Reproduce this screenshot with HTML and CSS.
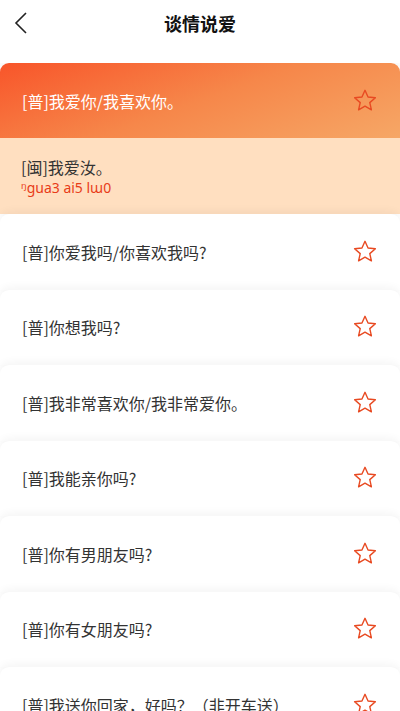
FILE: index.html
```html
<!DOCTYPE html>
<html lang="zh">
<head>
<meta charset="utf-8">
<link rel="stylesheet" href="styles.css">
</head>
<body>
<header class="topbar">
  <svg class="back" width="14" height="22" viewBox="0 0 14 22"><path d="M12 1 L2 11 L12 21" fill="none" stroke="#222" stroke-width="1.6"/></svg>
  <h1 class="title">谈情说爱</h1>
</header>
<main class="list">
  <section class="card open">
    <div class="row active">
      <span class="text">[普]我爱你/我喜欢你。</span>
      <svg class="star" viewBox="0 0 24 24"><path d="M12 2.8 L14.6 8.6 L20.9 9.2 L16.1 13.4 L17.5 19.6 L12 16.4 L6.5 19.6 L7.9 13.4 L3.1 9.2 L9.4 8.6 Z" fill="none" stroke="#e84a22" stroke-width="1.2" stroke-linejoin="round"/></svg>
    </div>
    <div class="detail">
      <div class="dtext">[闽]我爱汝。</div>
      <div class="pinyin">ᵑgua3 ai5 lɯ0</div>
    </div>
  </section>
  <section class="card"><div class="row"><span class="text">[普]你爱我吗/你喜欢我吗?</span><svg class="star" viewBox="0 0 24 24"><path d="M12 2.8 L14.6 8.6 L20.9 9.2 L16.1 13.4 L17.5 19.6 L12 16.4 L6.5 19.6 L7.9 13.4 L3.1 9.2 L9.4 8.6 Z" fill="none" stroke="#e84a22" stroke-width="1.2" stroke-linejoin="round"/></svg></div></section>
  <section class="card"><div class="row"><span class="text">[普]你想我吗?</span><svg class="star" viewBox="0 0 24 24"><path d="M12 2.8 L14.6 8.6 L20.9 9.2 L16.1 13.4 L17.5 19.6 L12 16.4 L6.5 19.6 L7.9 13.4 L3.1 9.2 L9.4 8.6 Z" fill="none" stroke="#e84a22" stroke-width="1.2" stroke-linejoin="round"/></svg></div></section>
  <section class="card"><div class="row"><span class="text">[普]我非常喜欢你/我非常爱你。</span><svg class="star" viewBox="0 0 24 24"><path d="M12 2.8 L14.6 8.6 L20.9 9.2 L16.1 13.4 L17.5 19.6 L12 16.4 L6.5 19.6 L7.9 13.4 L3.1 9.2 L9.4 8.6 Z" fill="none" stroke="#e84a22" stroke-width="1.2" stroke-linejoin="round"/></svg></div></section>
  <section class="card"><div class="row"><span class="text">[普]我能亲你吗?</span><svg class="star" viewBox="0 0 24 24"><path d="M12 2.8 L14.6 8.6 L20.9 9.2 L16.1 13.4 L17.5 19.6 L12 16.4 L6.5 19.6 L7.9 13.4 L3.1 9.2 L9.4 8.6 Z" fill="none" stroke="#e84a22" stroke-width="1.2" stroke-linejoin="round"/></svg></div></section>
  <section class="card"><div class="row"><span class="text">[普]你有男朋友吗?</span><svg class="star" viewBox="0 0 24 24"><path d="M12 2.8 L14.6 8.6 L20.9 9.2 L16.1 13.4 L17.5 19.6 L12 16.4 L6.5 19.6 L7.9 13.4 L3.1 9.2 L9.4 8.6 Z" fill="none" stroke="#e84a22" stroke-width="1.2" stroke-linejoin="round"/></svg></div></section>
  <section class="card"><div class="row"><span class="text">[普]你有女朋友吗?</span><svg class="star" viewBox="0 0 24 24"><path d="M12 2.8 L14.6 8.6 L20.9 9.2 L16.1 13.4 L17.5 19.6 L12 16.4 L6.5 19.6 L7.9 13.4 L3.1 9.2 L9.4 8.6 Z" fill="none" stroke="#e84a22" stroke-width="1.2" stroke-linejoin="round"/></svg></div></section>
  <section class="card"><div class="row"><span class="text">[普]我送你回家，好吗？（非开车送）</span><svg class="star" viewBox="0 0 24 24"><path d="M12 2.8 L14.6 8.6 L20.9 9.2 L16.1 13.4 L17.5 19.6 L12 16.4 L6.5 19.6 L7.9 13.4 L3.1 9.2 L9.4 8.6 Z" fill="none" stroke="#e84a22" stroke-width="1.2" stroke-linejoin="round"/></svg></div></section>
</main>
</body>
</html>
```
FILE: styles.css
```css
* { box-sizing: border-box; }
html, body { margin: 0; padding: 0; }
body {
  width: 400px;
  height: 711px;
  overflow: hidden;
  background: #fff;
  font-family: "Noto Sans CJK SC", "Noto Sans", sans-serif;
  color: #333;
}
.topbar {
  position: relative;
  height: 63px;
  display: flex;
  align-items: flex-start;
  justify-content: center;
  background: #fff;
}
.back {
  position: absolute;
  left: 14px;
  top: 12px;
}
.title {
  margin: 9px 0 0;
  font-size: 18px;
  font-weight: 700;
  line-height: 28px;
  color: #111;
}
.list { display: flex; flex-direction: column; }
.card {
  background: #fff;
  border-radius: 9px 9px 0 0;
  box-shadow: 0 -3px 8px rgba(0, 0, 0, 0.045);
  overflow: hidden;
}
.card.open {
  box-shadow: 0 -3px 8px rgba(0, 0, 0, 0.05);
}
.row {
  height: 75.5px;
  display: flex;
  align-items: center;
  justify-content: space-between;
  padding: 0 21px 0 22px;
}
.text {
  font-size: 16px;
  line-height: 22px;
  color: #333;
}
.row.active {
  height: 75px;
  background: linear-gradient(160deg, #f8552a 0%, #f6874a 50%, #f6a766 100%);
}
.row.active .text { color: #fff; }
.star {
  width: 28px;
  height: 28px;
  flex: none;
}
.detail {
  background: #ffdfc0;
  height: 76px;
  padding: 18px 21px 0;
}
.dtext {
  font-size: 16px;
  line-height: 22px;
  color: #333;
}
.pinyin {
  font-family: "Noto Sans", "DejaVu Sans", sans-serif;
  font-size: 14px;
  line-height: 20px;
  color: #e83c18;
}
```
